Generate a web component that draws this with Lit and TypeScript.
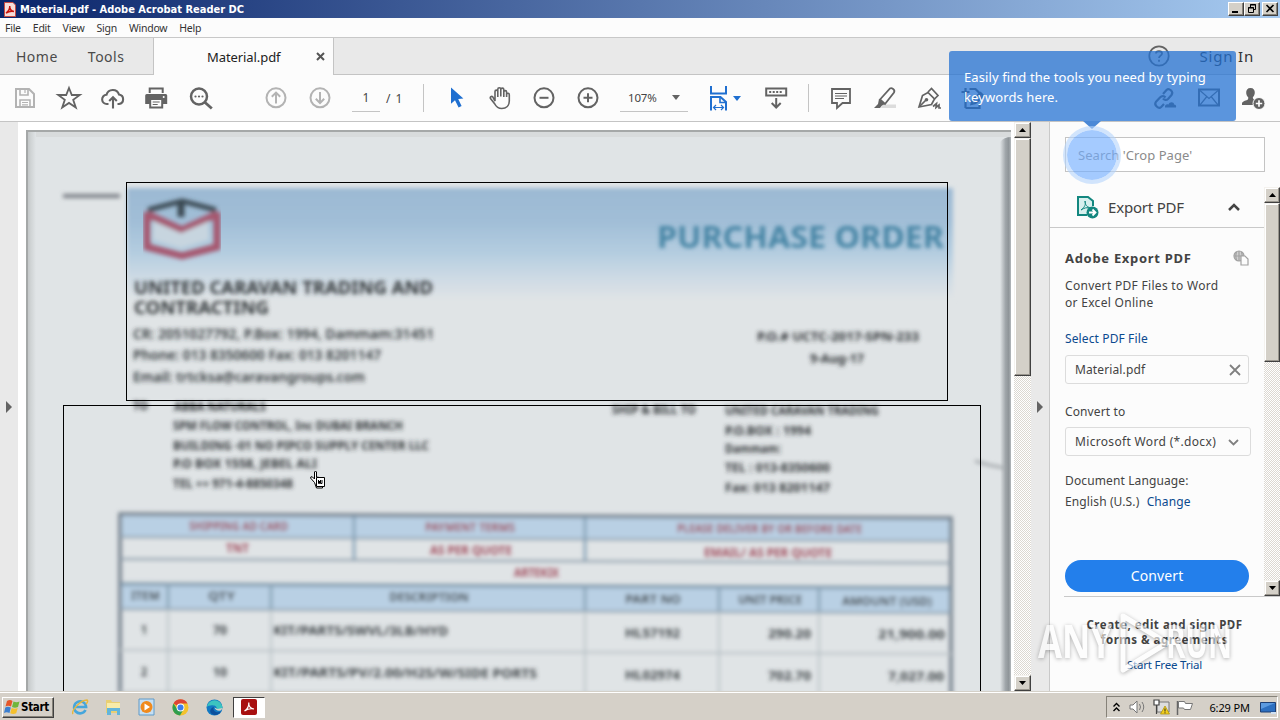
import { LitElement, html, css, svg } from 'lit';
import { customElement, property } from 'lit/decorators.js';

const icons = {
  save: svg`<g fill="none" stroke="#b3b3b3" stroke-width="2"><path d="M5 5h13l5 5v13H5z"/><path d="M9 5v6h8V5M9 23v-7h10v7" stroke-width="1.6"/><path d="M14 6v3M11 18.5h6M11 20.8h6" stroke-width="1.2"/></g>`,
  star: svg`<path d="M14 4l2.800 7h8l-6.600 4.800 2.600 7.800-6.800-4.700-6.800 4.700 2.600-7.800L3.200 11h8z" fill="none" stroke="#636363" stroke-width="1.8"/>`,
  cloud: svg`<g fill="none" stroke="#636363" stroke-width="2.100"><path d="M9.500 20H8a4.600 4.600 0 0 1-.5-9.200A6.500 6.500 0 0 1 20 10.500 4.800 4.800 0 0 1 20 20h-1.500"/><path d="M14 24.500V13.500M10.200 17L14 13.200l3.800 3.800"/></g>`,
  print: svg`<g transform="translate(-.8 0)"><path d="M6.500 3.500h15V9h-15z" fill="#636363"/><path d="M8.500 5.500h11V10h-11z" fill="#fcfcfc"/><path d="M4.500 10h19a1.500 1.500 0 0 1 1.500 1.500V20h-4v4.500H7V20H3v-8.500A1.500 1.500 0 0 1 4.500 10z" fill="#636363"/><path d="M9 16h10v6.500H9z" fill="#fcfcfc"/><path d="M10.500 18h7M10.500 20.500h5" stroke="#636363"/><circle cx="21.500" cy="13" r="1" fill="#fcfcfc"/></g>`,
  search: svg`<g fill="none" stroke="#636363"><circle cx="12" cy="12.500" r="8" stroke-width="2.500"/><path d="M17.800 18.300l7 6.200" stroke-width="2.800"/></g><g fill="#636363"><circle cx="8.500" cy="12.500" r="1.100"/><circle cx="12" cy="12.500" r="1.100"/><circle cx="15.500" cy="12.500" r="1.100"/></g>`,
  up: svg`<g fill="none" stroke="#b3b3b3" stroke-width="2"><circle cx="14" cy="13.800" r="9.500"/><path d="M14 19.500V9M9.800 12.800L14 8.600l4.200 4.200"/></g>`,
  down: svg`<g fill="none" stroke="#b3b3b3" stroke-width="2"><circle cx="14" cy="13.800" r="9.500"/><path d="M14 8v10.500M9.800 14.800L14 19l4.200-4.200"/></g>`,
  pointer: svg`<path d="M9 3.500v16.300l4-3.600 3.600 7.300 3-1.400-3.400-7 5.200-.6z" fill="#1f6fd0"/>`,
  hand: svg`<path d="M9.200 17V7.600c0-2 2.800-2 2.800 0V13 5.200c0-2 3-2 3 0V12.500 5.600c0-2 3-2 3 0V13 8c0-1.900 2.800-1.900 2.800 0V13v-2.300c0-1.900 2.700-1.900 2.700 0V17c0 4.500-3 7.500-7.500 7.500-4 0-5.500-1.500-7-4.500l-4.300-5.500c-.8-1.500 1-2.700 2.300-1.600z" transform="translate(-.2 0)" fill="#fcfcfc" stroke="#636363" stroke-width="1.600"/>`,
  minus: svg`<g fill="none" stroke="#636363" stroke-width="2"><circle cx="14" cy="13.800" r="9.500"/><path d="M9.500 13.800h9"/></g>`,
  plus: svg`<g fill="none" stroke="#636363" stroke-width="2"><circle cx="14" cy="13.800" r="9.500"/><path d="M9.500 13.800h9M14 9.300v9"/></g>`,
  fit: svg`<g fill="none" stroke="#1f6fd0" stroke-width="2"><path d="M6 2v7.500h15V2M6 26.500V13h9.500l5.500 5v8.500"/><path d="M15 13v5.500h6" stroke-width="1.600"/><path d="M9 23.500h9M11 21l-2.500 2.500L11 26M16 21l2.500 2.500L16 26" stroke-width="1.200"/></g>`,
  scroll: svg`<g fill="none" stroke="#636363" stroke-width="2" transform="translate(-.8 0)"><path d="M4 4.500h20v7H4z"/><path d="M7 8h14" stroke-dasharray="2 1.500"/><path d="M14 14v9M9.500 19l4.500 4.500 4.500-4.500"/></g>`,
  comment: svg`<path d="M5 5h18v14h-7.500L10 24v-5H5z" fill="none" stroke="#636363" stroke-width="1.800"/><path d="M8 9.500h12M8 12h12M8 14.500h9" stroke="#636363" stroke-width="1.200"/>`,
  marker: svg`<path d="M12 20.500h13V24H10z" fill="#dcdcdc"/><path d="M9 15.500L19 4.500c1.500-1 5.500 1 4 4L14 20z" fill="#fcfcfc" stroke="#636363" stroke-width="1.800"/><path d="M8 15l6 5-3 1.500-2 2.500H3l4-4z" fill="#636363"/>`,
  pen: svg`<g fill="none" stroke="#636363" stroke-width="1.700"><path d="M4 23l3.500-11.500 5.500-3 6.500 6.500-3 5.500z"/><path d="M13 8l3.500-3.500 6.500 7-3.500 3.500M4.500 22.500l6-6"/><path d="M18 22.500l3.500-3-.5 4 3-2.500v3h2"/></g><circle cx="11.500" cy="15.800" r="1.800" fill="#636363"/>`,
  edit: svg`<g fill="none" stroke="#555" stroke-width="2.200" transform="translate(-.5 0)"><path d="M7 24V12M7 24h14v-4M11 5h6l5 5v3M3 8h8M7 4v8"/><path d="M13 20l1-4 8-7 3 3-8 7z"/></g>`,
  link: svg`<g fill="none" stroke="#636363" stroke-width="2.200"><path d="M12 10l3.500-4c2.500-2.500 7.500 1.500 5 5l-3.500 4c-1.500 1.500-4 1-5-.5"/><path d="M14.500 13.500c-1.500-2-4-1.500-5.500 0L4.800 18c-2 3 2.700 7.500 5.400 5l2.800-3"/></g><path d="M14 23.500c-.5-3 2-4 3.500-3 1-3.500 6-2.500 5.500 0 2 0 2.500 1.500 2 3z" fill="#636363"/>`,
  mail: svg`<g fill="none" stroke="#636363" stroke-width="2"><path d="M4 5.500h20v16H4z"/><path d="M5 6.500l9 8 9-8M5 21l6.500-8M23 21l-6.500-8" stroke-width="1.200"/></g>`,
  person: svg`<path d="M11.500 4c3 0 4.500 2 4.300 5-.2 2-1 3.300-2 4.300.2 2 1.200 2.700 3.200 3.400V21H3v-1.500c0-2 3.500-3 5.200-3.500 1-.5 1.200-1.500 1-2.700-1-1-1.900-2.300-2-4.300C7 6 8.500 4 11.500 4z" fill="#636363"/><circle cx="20" cy="19.500" r="6" fill="#636363" stroke="#fcfcfc"/><path d="M16.800 19.500h6.400M20 16.300v6.400" stroke="#fcfcfc" stroke-width="1.700"/>`,
};

type IconName = keyof typeof icons;

@customElement('tool-icon')
export class ToolIcon extends LitElement {
  @property({ type: String }) name: IconName = 'save';

  static styles = css`
    :host {
      display: flex;
      flex: none;
      justify-content: center;
      width: 44px;
    }
    svg {
      display: block;
      width: 28px;
      height: 28px;
    }
  `;

  render() {
    return html`<svg viewBox="0 0 28 28">${icons[this.name]}</svg>`;
  }
}

@customElement('classic-scrollbar')
export class ClassicScrollbar extends LitElement {
  @property({ type: Number }) thumb = 100;

  static styles = css`
    :host {
      display: flex;
      flex-direction: column;
      background: repeating-conic-gradient(#ffffff 0 25%, #dcd8d1 0 50%) 0 0 / 2px 2px;
    }
    .button,
    .thumb {
      box-sizing: border-box;
      flex: none;
      background: #d4d0c8;
      border: 1px solid;
      border-color: #f4f2ee #404040 #404040 #f4f2ee;
      box-shadow: inset -1px -1px #9a968e, inset 1px 1px #ffffff;
    }
    .button {
      display: flex;
      align-items: center;
      justify-content: center;
      height: 16px;
    }
    .space {
      flex: 1;
    }
    svg {
      width: 7px;
      height: 4px;
    }
  `;

  render() {
    return html`
      <div class="button"><svg viewBox="0 0 7 4"><path d="M0 4L3.500 0 7 4z" /></svg></div>
      <div class="thumb" style="height:${this.thumb}px"></div>
      <div class="space"></div>
      <div class="button"><svg viewBox="0 0 7 4"><path d="M0 0l3.500 4L7 0z" /></svg></div>
    `;
  }
}

// x, baseline, width, text
type Line = [number, number, number, string];

const companyName: Line[] = [
  [134, 294, 299, 'UNITED CARAVAN TRADING AND'],
  [134, 314, 135, 'CONTRACTING'],
];

const companyInfo: Line[] = [
  [133, 339, 301, 'CR: 2051027792, P.Box: 1994, Dammam:31451'],
  [133, 360, 248, 'Phone: 013 8350600 Fax: 013 8201147'],
  [133, 382, 232, 'Email: trtcksa@caravangroups.com'],
];

const addresses: Line[] = [
  [757, 341, 162, 'P.O.# UCTC-2017-SPN-233'],
  [810, 363, 54, '9-Aug-17'],
  [133, 410, 15, 'TO'],
  [174, 411, 92, 'ABBA NATURALS'],
  [173, 430, 230, 'SPM FLOW CONTROL, Inc DUBAI BRANCH'],
  [173, 450, 256, 'BUILDING -01 NO PIPCO SUPPLY CENTER LLC'],
  [173, 468, 144, 'P.O BOX 1558, JEBEL ALI'],
  [173, 488, 120, 'TEL ++ 971-4-8850348'],
  [612, 414, 84, 'SHIP & BILL TO'],
  [725, 415, 154, 'UNITED CARAVAN TRADING'],
  [725, 435, 86, 'P.O.BOX : 1994'],
  [725, 453, 56, 'Dammam:'],
  [725, 472, 105, 'TEL : 013-8350600'],
  [725, 492, 105, 'Fax: 013 8201147'],
];

const terms: Line[] = [
  [189, 530, 99, 'SHIPPING AD CARD'],
  [425, 530, 90, 'PAYMENT TERMS'],
  [677, 530, 185, 'PLEASE DELIVER BY OR BEFORE DATE'],
  [226, 552, 23, 'TNT'],
  [430, 553, 82, 'AS PER QUOTE'],
  [704, 554, 128, 'EMAIL/ AS PER QUOTE'],
  [514, 575, 45, 'ARTEKIX'],
];

const items: Line[] = [
  [131, 600, 29, 'ITEM'],
  [208, 600, 27, 'QTY'],
  [389, 600, 80, 'DESCRIPTION'],
  [625, 601, 56, 'PART NO'],
  [738, 601, 64, 'UNIT PRICE'],
  [842, 602, 90, 'AMOUNT (USD)'],
  [141, 634, 6, '1'],
  [213, 634, 14, '70'],
  [273, 634, 175, 'KIT/PARTS/SWVL/3LB/HYD'],
  [625, 635, 55, 'HL57192'],
  [768, 635, 43, '290.20'],
  [878, 635, 67, '21,900.00'],
  [141, 676, 6, '2'],
  [213, 676, 14, '10'],
  [273, 676, 264, 'KIT/PARTS/PV/2.00/H2S/W/SIDE PORTS'],
  [625, 677, 55, 'HL02974'],
  [768, 677, 43, '702.70'],
  [888, 677, 56, '7,027.00'],
];

const lines = (list: Line[]) =>
  list.map(
    ([x, y, width, text]) =>
      svg`<text x=${x} y=${y} textLength=${width} lengthAdjust="spacingAndGlyphs">${text}</text>`
  );

@customElement('scanned-page')
export class ScannedPage extends LitElement {
  static styles = css`
    :host {
      display: block;
    }
    svg {
      display: block;
      width: 100%;
      height: 100%;
      font-family: 'Noto Sans', sans-serif;
    }
    .heading {
      font: 700 31px 'Noto Sans', sans-serif;
      fill: #4685a5;
    }
    .company {
      font-size: 18px;
      font-weight: 700;
      fill: #33373a;
    }
    .info {
      font-size: 14px;
      font-weight: 600;
      fill: #2f3437;
    }
    .address {
      font-size: 12px;
      font-weight: 700;
      fill: #303437;
    }
    .terms {
      font-size: 12px;
      font-weight: 700;
      fill: #a04c5c;
    }
    .items {
      font-size: 12.5px;
      font-weight: 700;
      fill: #3f4548;
    }
  `;

  render() {
    return html`
      <svg viewBox="26 130 985 561" preserveAspectRatio="none">
        <defs>
          <linearGradient id="band" x2="0" y2="1">
            <stop offset="0" stop-color="#9cb9d3" />
            <stop offset=".3" stop-color="#a1bed7" />
            <stop offset=".58" stop-color="#b4cde0" />
            <stop offset=".78" stop-color="#cbd9e4" />
            <stop offset="1" stop-color="#e0e4e6" />
          </linearGradient>
          <linearGradient id="edge">
            <stop offset="0" stop-color="#e0e4e6" />
            <stop offset=".5" stop-color="#a0a6aa" />
            <stop offset=".8" stop-color="#8e9498" />
            <stop offset="1" stop-color="#b5babd" />
          </linearGradient>
          <linearGradient id="left">
            <stop offset="0" stop-color="#bcc0c1" />
            <stop offset=".5" stop-color="#d0d4d5" />
            <stop offset="1" stop-color="#e0e4e6" />
          </linearGradient>
          <filter id="soft" x="-5%" y="-20%" width="110%" height="140%"><feGaussianBlur stdDeviation="2.200" /></filter>
        </defs>
        <rect x="26" y="130" width="985" height="561" fill="#e0e4e6" />
        <rect x="26" y="132" width="985" height="5" fill="#d8dbdc" />
        <rect x="26" y="132" width="10" height="559" fill="url(#left)" />
        <path d="M1000 142q4-5 11-5v554h-11z" fill="url(#edge)" />
        <path d="M26 131h985M27 130v561" stroke="#a5a8a8" stroke-width="2" />
        <g filter="url(#soft)">
          <rect x="127" y="188" width="826" height="112" fill="url(#band)" />
          <path d="M63 196h57" stroke="#7a7f86" stroke-width="4" />
          <path d="M975 461l14 4 16 3" fill="none" stroke="#9da2a6" stroke-width="2.500" />
        </g>
        <g filter="url(#soft)" fill="none">
          <path d="M147 212v35l35 9 35-9v-35" stroke="#a6566e" stroke-width="7" />
          <path d="M149 215l33 15 33-15" stroke="#a6566e" stroke-width="7" />
          <path d="M153 240l28 8 28-8V221l-28 12-28-12z" fill="#c7d5df" />
          <path d="M148 210l34-9 34 9" stroke="#3a4a52" stroke-width="5" />
          <path d="M181 200v17" stroke="#3a4a52" stroke-width="7" />
        </g>
        <g filter="url(#soft)">
          <g class="heading">${lines([[657, 248, 287, 'PURCHASE ORDER']])}</g>
          <g class="company">${lines(companyName)}</g>
          <g class="info">${lines(companyInfo)}</g>
          <g class="address">${lines(addresses)}</g>
        </g>
        <g filter="url(#soft)" transform="matrix(1 .0048 0 1 0 -.576)">
          <path d="M120 515h831v22H120zM120 584h831v25H120z" fill="#b9d0e4" />
          <g fill="none" stroke-width="2">
            <path d="M120 720V514h831v206" stroke="#737f8b" stroke-width="3.600" />
            <path d="M120 537h831M120 559h831M120 609h831" stroke="#8b9ba9" />
            <path d="M120 584h831" stroke="#7690a4" stroke-width="3" />
            <path d="M354 515v43M585 515v43" stroke="#7c9ab0" stroke-width="2.500" />
            <path d="M168 584v25M271 584v25M585 584v25M719 584v25M819 584v25" stroke="#8ba5b8" stroke-width="3" />
            <path d="M168 609v100M271 609v100M585 609v100M719 609v100M819 609v100" stroke="#bcc4c9" />
            <path d="M120 650h831M120 692h831" stroke="#b9c1c6" />
          </g>
          <g class="terms">${lines(terms)}</g>
          <g class="items">${lines(items)}</g>
        </g>
      </svg>
    `;
  }
}

@customElement('export-panel')
export class ExportPanel extends LitElement {
  static styles = css`
    :host {
      display: flex;
      flex-direction: column;
      position: relative;
      box-sizing: border-box;
      background: #fcfcfc;
      border-left: 1px solid #c9c9c9;
      color: #434343;
      font-size: 12px;
      line-height: 18px;
      letter-spacing: 0.12px;
    }
    .search {
      box-sizing: border-box;
      height: 35px;
      margin: 15px 15px 0;
      padding: 0 12px;
      border: 1px solid #c4c4c4;
      background: #fff;
      color: #8b8b8b;
      font-size: 13px;
      line-height: 35px;
      letter-spacing: 0.05px;
    }
    .middle {
      display: flex;
      height: 409px;
      margin-top: 15px;
    }
    .content {
      flex: 1;
    }
    .scroll {
      width: 16px;
    }
    .head {
      display: flex;
      align-items: center;
      box-sizing: border-box;
      height: 41px;
      padding: 0 23px 0 26px;
      border-bottom: 1px solid #c9c9c9;
      font-size: 15px;
      letter-spacing: -0.2px;
    }
    .head svg {
      margin-right: 9px;
    }
    .head .chevron {
      margin: 0 0 0 auto;
    }
    .body {
      padding: 20px 15px 0 15px;
    }
    .title {
      display: flex;
      justify-content: space-between;
      align-items: center;
      height: 20px;
      font-size: 13px;
      font-weight: 700;
      letter-spacing: 0.7px;
    }
    .about {
      margin-top: 9px;
      line-height: 17px;
      letter-spacing: 0.3px;
    }
    .link {
      color: #0b4a8f;
    }
    .select-file {
      margin-top: 19px;
    }
    .field {
      display: flex;
      align-items: center;
      justify-content: space-between;
      box-sizing: border-box;
      height: 29px;
      margin-top: 7px;
      padding: 0 7px 0 9px;
      border: 1px solid #dcdcdc;
      border-radius: 3px;
    }
    .field.format {
      margin: 6px -2px 0 0;
      padding: 1px 11px 0 9px;
      letter-spacing: 0.33px;
    }
    .label {
      margin-top: 19px;
    }
    .language {
      margin-top: 16px;
    }
    .value {
      margin-top: 3px;
    }
    .value .link {
      margin-left: 4px;
    }
    .convert {
      height: 32px;
      margin-top: 49px;
      border-radius: 16px;
      background: #237feb;
      color: #fff;
      font-size: 14px;
      line-height: 32px;
      text-align: center;
    }
    .footer {
      flex: 1;
      margin-left: 14px;
      border-top: 1px solid #c9c9c9;
      padding: 20px 15px 0 0;
      text-align: center;
    }
    .promo {
      font-size: 11.5px;
      font-weight: 700;
      line-height: 15px;
      letter-spacing: 0.52px;
      white-space: nowrap;
    }
    .footer .link {
      margin-top: 9px;
      font-size: 11.5px;
      letter-spacing: -0.2px;
    }
    .watermark {
      position: absolute;
      left: -14px;
      top: 488px;
      width: 200px;
      height: 66px;
      opacity: 0.6;
      overflow: visible;
      filter: drop-shadow(0 1px 2px rgba(0, 0, 0, 0.5));
      font: 700 46px 'Open Sans', sans-serif;
      letter-spacing: 0;
    }
  `;

  render() {
    return html`
      <div class="search">Search 'Crop Page'</div>
      <div class="middle">
        <div class="content">
          <div class="head">
            <svg width="23" height="24" viewBox="0 0 23 24" fill="none">
              <path d="M11 20H2V2h10l5 4v5" fill="#d8f0ee" stroke="#13877f" stroke-width="2" />
              <path d="M5 15c4-3 5-6 4-9 0 4 2 6 6 7-4-1-7 0-10 2z" stroke="#13877f" />
              <circle cx="16.500" cy="17.500" r="6" fill="#13877f" />
              <path d="M13 17.500h6M16.500 14.500l3 3-3 3" stroke="#fff" stroke-width="1.800" />
            </svg>
            <span>Export PDF</span>
            <svg class="chevron" width="14" height="10" viewBox="0 0 14 10">
              <path d="M2 8l5-5 5 5" fill="none" stroke="#444" stroke-width="2.500" />
            </svg>
          </div>
          <div class="body">
            <div class="title">
              <span>Adobe Export PDF</span>
              <svg width="16" height="16" viewBox="0 0 16 16" fill="none" stroke="#a2a2a2" stroke-width="1.200">
                <circle cx="6" cy="6" r="5" fill="#d0d0d0" />
                <path d="M1 6h10M6 1v10M3.500 2c-1 3-1 5 0 8M8.500 2c1 3 1 5 0 8" />
                <path d="M8 6h4l3 3v6H8z" fill="#fcfcfc" />
              </svg>
            </div>
            <div class="about">Convert PDF Files to Word<br />or Excel Online</div>
            <div class="select-file link">Select PDF File</div>
            <div class="field">
              <span>Material.pdf</span>
              <svg width="12" height="12" viewBox="0 0 12 12">
                <path d="M1 1l10 10M11 1L1 11" stroke="#808080" stroke-width="1.800" />
              </svg>
            </div>
            <div class="label">Convert to</div>
            <div class="field format">
              <span>Microsoft Word (*.docx)</span>
              <svg width="11" height="7" viewBox="0 0 11 7">
                <path d="M1 1l4.500 4.500L10 1" fill="none" stroke="#808080" stroke-width="1.800" />
              </svg>
            </div>
            <div class="language">Document Language:</div>
            <div class="value">English (U.S.) <span class="link">Change</span></div>
            <div class="convert">Convert</div>
          </div>
        </div>
        <classic-scrollbar class="scroll" .thumb=${159}></classic-scrollbar>
      </div>
      <div class="footer">
        <div class="promo">Create, edit and sign PDF<br />forms &amp; agreements</div>
        <div class="link">Start Free Trial</div>
      </div>
      <svg class="watermark" viewBox="0 0 200 66" fill="#fff">
        <text x="2" y="48" textLength="74" lengthAdjust="spacingAndGlyphs">ANY</text>
        <path d="M87 6l44 27-44 27z" fill="none" stroke="#fff" stroke-width="5" stroke-linejoin="round" />
        <text x="130" y="48" textLength="66" lengthAdjust="spacingAndGlyphs">RUN</text>
      </svg>
    `;
  }
}

@customElement('task-bar')
export class TaskBar extends LitElement {
  static styles = css`
    :host {
      display: flex;
      align-items: center;
      box-sizing: border-box;
      height: 29px;
      padding: 2px 2px 0;
      border-top: 1px solid #d4d0c8;
      background: #d5d0c8;
      box-shadow: inset 0 1px #fff;
      color: #000;
    }
    .start {
      display: flex;
      align-items: center;
      box-sizing: border-box;
      width: 52px;
      height: 21px;
      padding-left: 1px;
      border: 1px solid;
      border-color: #fff #404040 #404040 #fff;
      box-shadow: inset -1px -1px #868279;
      font: 700 11.5px 'DejaVu Sans Condensed', sans-serif;
      letter-spacing: -0.3px;
    }
    .apps {
      display: flex;
      align-items: center;
      margin-left: 9px;
    }
    .app {
      display: flex;
      align-items: center;
      justify-content: center;
      width: 33.6px;
      height: 21px;
    }
    .app.active {
      box-sizing: border-box;
      width: 32px;
      margin-left: 2px;
      background: #fff;
      border: 1px solid;
      border-color: #404040 #fff #fff #404040;
    }
    .tray {
      display: flex;
      align-items: center;
      box-sizing: border-box;
      width: 172px;
      height: 22px;
      margin-left: auto;
      padding: 0 1px 0 6px;
      border: 1px solid;
      border-color: #868279 #fff #fff #868279;
      font-size: 11px;
      letter-spacing: -0.1px;
    }
    .clock {
      margin: 0 10px 0 auto;
    }
  `;

  render() {
    return html`
      <div class="start">
        <svg width="17" height="16" viewBox="0 0 17 16">
          <path d="M3 2q3-2 5.500 0L7 7.500q-3-1.500-5.500 0z" fill="#e5572a" />
          <path d="M9.500 2.500q3 1.500 6 0L14 8q-3 1.500-6 0z" fill="#6fb63c" />
          <path d="M1.300 8.500q2.500-1.700 5.500 0L5.500 14q-3-1.500-5.500 0z" fill="#3c7fd0" />
          <path d="M7.700 9q3 1.500 6 0l-1.500 5.300q-3 1.500-6 0z" fill="#f5c02c" />
        </svg>
        <span>Start</span>
      </div>
      <div class="apps">
        <div class="app">
          <svg width="18" height="18" viewBox="0 0 18 18" fill="none">
            <path d="M14.500 12a6 6 0 1 1 .6-3H5" stroke="#45a6dc" stroke-width="2.600" />
            <path d="M2 16C0 13 9 2 16 2c2 1-1 4-1 4" stroke="#e7b73c" stroke-width="1.400" />
          </svg>
        </div>
        <div class="app">
          <svg width="18" height="18" viewBox="0 0 18 18">
            <path d="M2 2h5l1 2h8v11H2z" fill="#e9cf73" />
            <path d="M3 5h13v6H3z" fill="#f8eba9" />
            <path d="M3 10h13v7h-3v-4H7v4H3z" fill="#63b5db" />
          </svg>
        </div>
        <div class="app">
          <svg width="17" height="18" viewBox="0 0 17 18">
            <path d="M1 1h15v16H1z" fill="#c6dff3" stroke="#5f9ac8" />
            <circle cx="8.500" cy="9" r="6" fill="#f08a1d" />
            <path d="M6.500 5.500l5.500 3.500-5.500 3.500z" fill="#fff" />
          </svg>
        </div>
        <div class="app">
          <svg width="17" height="17" viewBox="0 0 17 17">
            <circle cx="8.500" cy="8.500" r="8" fill="#f3c22d" />
            <path d="M8.500 8.500L1.500 4.500A8 8 0 0 1 15.500 4.500H8.500z" fill="#dd4435" />
            <path d="M1.500 4.500a8 8 0 0 0 6.500 12l3.500-6-6 0z" fill="#2f9e50" />
            <circle cx="8.500" cy="8.500" r="3.900" fill="#fff" />
            <circle cx="8.500" cy="8.500" r="3" fill="#3b7ded" />
          </svg>
        </div>
        <div class="app">
          <svg width="17" height="17" viewBox="0 0 17 17">
            <circle cx="8.500" cy="8.500" r="8" fill="#1278c2" />
            <path d="M.7 8A8 8 0 0 1 16.500 8c0 3-4 4-6 2.500 1-2-1-4-3-4C4.500 6 2 7 .7 8z" fill="#3cc3c0" />
            <path d="M8 8c-2 3 2 7 7 4.500-2 3-6 4.500-9 2.500S4 9 8 8z" fill="#0c4f9c" />
            <path d="M8.500 8.500c.5 2.500 3 3.500 6.500 3l1.500-2.500-5 1z" fill="#d5d0c8" />
          </svg>
        </div>
        <div class="app active">
          <svg width="16" height="16" viewBox="0 0 16 16" fill="none">
            <rect width="16" height="16" rx="2" fill="#a80f0f" />
            <path d="M3.500 12c3-2 4.500-5 4.300-8.500C7.500 7 9 9.500 13 10c-3.500-.7-6.500 0-9.500 2z" stroke="#fff" stroke-width="1.200" />
          </svg>
        </div>
      </div>
      <div class="tray">
        <svg width="7" height="10" viewBox="0 0 7 10" fill="none" stroke="#000" stroke-width="1.400">
          <path d="M.5 4.500l3-3 3 3M.5 9l3-3 3 3" />
        </svg>
        <svg width="86" height="18" viewBox="0 0 86 18" fill="none">
          <path d="M10 7h3l4-4v12l-4-4h-3z" fill="#fff" stroke="#777" />
          <path d="M19.500 6q2 3 0 6M22 4q3.500 5 0 10" stroke="#777" />
          <path d="M37 4h12v10H37z" fill="#ddd" stroke="#777" />
          <path d="M34 2h5v5h-5zM36.500 7v9" fill="#fff" stroke="#444" stroke-width="1.200" />
          <path d="M45 8l4.500 8h-9z" fill="#f4cf1e" stroke="#a88c00" stroke-width=".7" />
          <path d="M45 10.500v3M45 14.300v1" stroke="#222" />
          <path d="M57.500 3v14" stroke="#666" stroke-width="1.500" />
          <path d="M58.500 3.500h6l1 2h7l-2 6h-6l-1-1.500h-5z" fill="#fff" stroke="#777" />
        </svg>
        <span class="clock">6:29 PM</span>
        <svg width="16" height="15" viewBox="0 0 16 15">
          <path d="M.5 2.500h15V12H.5z" fill="#2c6fc0" stroke="#1d3f75" />
          <path d="M1 3h14L1 9z" fill="#5b9ae0" />
          <path d="M11 12h5v2h-5z" fill="#cfe0f2" />
        </svg>
      </div>
    `;
  }
}

@customElement('app-root')
export class AppRoot extends LitElement {
  static styles = css`
    :host {
      display: flex;
      flex-direction: column;
      position: relative;
      width: 1280px;
      height: 720px;
      overflow: hidden;
      background: #fff;
      color: #444;
      font-family: 'Noto Sans', sans-serif;
      white-space: nowrap;
    }
    .titlebar {
      display: flex;
      align-items: center;
      box-sizing: border-box;
      height: 18px;
      padding: 0 2px 0 4px;
      background: linear-gradient(90deg, #0a246a, #a6caf0);
      color: #fff;
      font: 700 11px 'DejaVu Sans Condensed', sans-serif;
    }
    .titlebar svg {
      margin-right: 4px;
    }
    .window-buttons {
      display: flex;
      margin-left: auto;
    }
    .window-button {
      box-sizing: border-box;
      width: 16px;
      height: 14px;
      background: #d4d0c8;
      border: 1px solid;
      border-color: #fff #404040 #404040 #fff;
      box-shadow: inset -1px -1px #868279;
    }
    .window-button svg {
      display: block;
      margin: 0;
    }
    .window-button.close {
      margin-left: 2px;
    }
    .menubar {
      display: flex;
      gap: 12px;
      height: 19px;
      padding-left: 5px;
      font-size: 10.5px;
      line-height: 20px;
      letter-spacing: -0.25px;
      background: #fcfcfc;
      color: #333;
    }
    .tabs {
      display: flex;
      box-sizing: border-box;
      height: 38px;
      border-top: 1px solid #c8c8c8;
      background: #e9e9e9;
      box-shadow: inset 0 -1px #c4c4c4;
      color: #4b4b4b;
      font-size: 14px;
      line-height: 38px;
      letter-spacing: 0.5px;
    }
    .links {
      display: flex;
      box-sizing: border-box;
      gap: 30px;
      width: 154px;
      padding-left: 16px;
      border-right: 1px solid #c4c4c4;
    }
    .tab {
      display: flex;
      align-items: center;
      box-sizing: border-box;
      width: 180px;
      padding: 0 8px 0 53px;
      background: #fcfcfc;
      border-right: 1px solid #c4c4c4;
      color: #222;
      font-size: 13px;
      letter-spacing: -0.08px;
    }
    .tab svg {
      margin-left: auto;
    }
    .account {
      display: flex;
      align-items: center;
      gap: 30px;
      margin-left: auto;
      padding: 0 26px 2px 0;
      color: #333;
      font-size: 15px;
      letter-spacing: 0.8px;
    }
    .toolbar {
      display: flex;
      align-items: center;
      box-sizing: border-box;
      height: 47px;
      padding: 0 5px 0 3px;
      border-bottom: 1px solid #c4c4c4;
      background: #fcfcfc;
      font-size: 12px;
    }
    .toolbar .nav {
      margin-left: 31px;
    }
    .page-input,
    .zoom {
      box-sizing: border-box;
      height: 27px;
      border-bottom: 1px solid #c4c4c4;
      line-height: 26px;
    }
    .page-input {
      width: 28px;
      margin-left: 10px;
      text-align: center;
    }
    .page-count {
      width: 19px;
      margin-left: 6px;
      word-spacing: 2px;
    }
    .divider {
      width: 1px;
      height: 28px;
      background: #c4c4c4;
    }
    .divider.first {
      margin: 0 10px 0 18px;
    }
    .divider.second {
      margin: 0 10px 0 9px;
    }
    .zoom {
      display: flex;
      align-items: center;
      width: 68px;
      margin: 0 13px 0 10px;
      padding: 0 8px;
      font-size: 11.5px;
      letter-spacing: -0.2px;
    }
    .caret {
      margin-left: auto;
      border: 4px solid transparent;
      border-top: 5px solid #636363;
      border-bottom: 0;
    }
    .fit {
      width: 36px;
    }
    .caret.blue {
      margin: 0 14px 0 -4px;
      border-top-color: #1f6fd0;
    }
    .share {
      display: flex;
      margin-left: auto;
    }
    .main {
      display: flex;
      height: 569px;
    }
    .rail {
      display: flex;
      align-items: center;
      justify-content: center;
      box-sizing: border-box;
      width: 18px;
      background: #e9e9e9;
    }
    .rail svg {
      width: 6px;
      height: 12px;
    }
    .viewer {
      position: relative;
      width: 993px;
      padding: 8px 0 0 8px;
      box-sizing: border-box;
      margin-right: 3px;
    }
    .page {
      height: 561px;
    }
    .crop {
      position: absolute;
      box-sizing: border-box;
      border: 1px solid #000;
    }
    .crop.header {
      left: 108px;
      top: 60px;
      width: 822px;
      height: 219px;
    }
    .crop.contents {
      left: 45px;
      top: 283px;
      width: 918px;
      height: 286px;
      border-bottom: 0;
    }
    .cursor {
      position: absolute;
      left: 291px;
      top: 348px;
    }
    .viewer-scroll {
      width: 17px;
    }
    .panel {
      flex: 1;
    }
    .tip {
      position: absolute;
      left: 949px;
      top: 51px;
      box-sizing: border-box;
      width: 287px;
      height: 70px;
      padding: 16px 15px;
      border-radius: 3px;
      background: rgba(35, 113, 211, 0.74);
      color: #fff;
      font-size: 13px;
      line-height: 20px;
      letter-spacing: 0.1px;
    }
    .tip::after {
      content: '';
      position: absolute;
      left: 134px;
      top: 70px;
      border: 9px solid transparent;
      border-top: 8px solid #4a88d6;
      border-bottom: 0;
    }
    .beacon {
      position: absolute;
      left: 1063px;
      top: 126px;
      box-sizing: border-box;
      width: 58px;
      height: 58px;
      border: 4px solid rgba(180, 212, 252, 0.6);
      border-radius: 50%;
      background: rgba(116, 175, 255, 0.65);
      background-clip: padding-box;
    }
  `;

  render() {
    return html`
      <div class="titlebar">
        <svg width="12" height="15" viewBox="0 0 12 15">
          <path d="M.5.5H9L11.500 3v11.500H.5z" fill="#f6dcd8" stroke="#c84b42" />
          <path d="M2 11c3-2 4-4 3.700-7C5.600 7 7 9 10 9.500 7 9 4.500 9.500 2 11z" fill="none" stroke="#c8140c" stroke-width="1.500" />
        </svg>
        <span class="caption">Material.pdf - Adobe Acrobat Reader DC</span>
        <div class="window-buttons">
          <div class="window-button">
            <svg width="14" height="12"><path d="M3 9h6" stroke="#000" stroke-width="2" /></svg>
          </div>
          <div class="window-button">
            <svg width="14" height="12" fill="none" stroke="#000">
              <path d="M5.500 4V1.500h5v5H9M5 2h6M3.500 4.500h5v5h-5zM3 5h6" />
            </svg>
          </div>
          <div class="window-button close">
            <svg width="14" height="12"><path d="M3.500 2l7 7M10.500 2l-7 7" stroke="#000" stroke-width="1.600" /></svg>
          </div>
        </div>
      </div>
      <div class="menubar">
        ${['File', 'Edit', 'View', 'Sign', 'Window', 'Help'].map((item) => html`<span>${item}</span>`)}
      </div>
      <div class="tabs">
        <div class="links"><span>Home</span><span>Tools</span></div>
        <div class="tab">
          <span>Material.pdf</span>
          <svg width="9" height="9" viewBox="0 0 9 9">
            <path d="M1 1l7 7M8 1L1 8" stroke="#555" stroke-width="2" />
          </svg>
        </div>
        <div class="account">
          <svg width="22" height="22" viewBox="0 0 22 22" fill="none" stroke="#636363" stroke-width="1.800">
            <circle cx="11" cy="11" r="9.700" />
            <path d="M8 8.500C8 5.500 14 5.500 14 8.500c0 2-3 2.300-3 4.500M11 14.800v2" />
          </svg>
          <span>Sign In</span>
        </div>
      </div>
      <div class="toolbar">
        ${this.tools(['save', 'star', 'cloud', 'print', 'search'])}
        <tool-icon class="nav" name="up"></tool-icon>
        <tool-icon name="down"></tool-icon>
        <div class="page-input">1</div>
        <div class="page-count">/ 1</div>
        <div class="divider first"></div>
        ${this.tools(['pointer', 'hand', 'minus', 'plus'])}
        <div class="zoom"><span>107%</span><i class="caret"></i></div>
        <tool-icon class="fit" name="fit"></tool-icon>
        <i class="caret blue"></i>
        <tool-icon name="scroll"></tool-icon>
        <div class="divider second"></div>
        ${this.tools(['comment', 'marker', 'pen', 'edit'])}
        <div class="share">${this.tools(['link', 'mail', 'person'])}</div>
      </div>
      <div class="main">
        ${this.rail()}
        <div class="viewer">
          <scanned-page class="page"></scanned-page>
          <div class="crop header"></div>
          <div class="crop contents"></div>
          <svg class="cursor" width="18" height="20" viewBox="0 0 18 20">
            <path d="M5.500 12.500L1.500 8q0-2 2-1l2 2V2q1-2 2 0v5l6 1v10h-6z" fill="#fff" stroke="#000" />
            <path d="M7.500 7.500h8v9h-8z" fill="#fff" stroke="#000" />
            <path d="M9.500 10v3.500h1V11M11.500 10v3.500h1.500V10" fill="none" stroke="#000" />
          </svg>
        </div>
        <classic-scrollbar class="viewer-scroll" .thumb=${238}></classic-scrollbar>
        ${this.rail()}
        <export-panel class="panel"></export-panel>
      </div>
      <task-bar></task-bar>
      <div class="tip">Easily find the tools you need by typing<br />keywords here.</div>
      <div class="beacon"></div>
    `;
  }

  private tools(names: IconName[]) {
    return names.map((name) => html`<tool-icon name=${name}></tool-icon>`);
  }

  private rail() {
    return html`
      <div class="rail">
        <svg viewBox="0 0 6 12"><path d="M0 0l6 6-6 6z" fill="#636363" /></svg>
      </div>
    `;
  }
}

declare global {
  interface HTMLElementTagNameMap {
    'app-root': AppRoot;
    'tool-icon': ToolIcon;
    'classic-scrollbar': ClassicScrollbar;
    'scanned-page': ScannedPage;
    'export-panel': ExportPanel;
    'task-bar': TaskBar;
  }
}
